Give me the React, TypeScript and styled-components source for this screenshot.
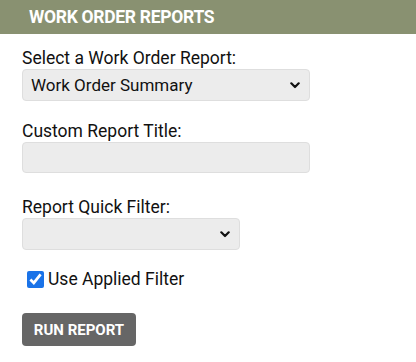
import React from "react";
import styled, { createGlobalStyle } from "styled-components";

const Global = createGlobalStyle`
  html, body { margin: 0; padding: 0; background: #fff; }
  body { font-family: Roboto, "Liberation Sans", Arial, sans-serif; color: #111; }
`;

const Panel = styled.div`
  width: 416px;
`;

const Header = styled.div`
  height: 34px;
  background: #899171;
  color: #fff;
  display: flex;
  align-items: center;
  padding-left: 29px;
  font-weight: 700;
  font-size: 17.5px;
  letter-spacing: -0.3px;
`;

const Body = styled.div`
  padding: 14px 22px 0 22px;
  display: flex;
  flex-direction: column;
`;

const Field = styled.div<{ $gap: number }>`
  display: flex;
  flex-direction: column;
  align-items: flex-start;
  margin-bottom: ${(p) => p.$gap}px;
`;

const Label = styled.label`
  font-size: 17.5px;
  line-height: 20px;
  margin-bottom: 1px;
`;

const SelectWrap = styled.div<{ $w: number }>`
  position: relative;
  width: ${(p) => p.$w}px;
  height: 32px;
`;

const Select = styled.select`
  appearance: none;
  -webkit-appearance: none;
  width: 100%;
  height: 100%;
  box-sizing: border-box;
  background: #ececec;
  border: 1px solid #dedede;
  border-radius: 4px;
  font-family: Roboto, "Liberation Sans", Arial, sans-serif;
  font-size: 17px;
  color: #111;
  padding: 0 28px 0 8px;
  outline: none;
`;

const Chevron = styled.svg`
  position: absolute;
  right: 10px;
  top: 13px;
  width: 10px;
  height: 7px;
  pointer-events: none;
`;

const Input = styled.input`
  width: 288px;
  height: 31px;
  box-sizing: border-box;
  background: #ececec;
  border: 1px solid #dedede;
  border-radius: 4px;
  font-family: Roboto, "Liberation Sans", Arial, sans-serif;
  font-size: 17px;
  padding: 0 8px;
  outline: none;
`;

const CheckRow = styled.label`
  display: flex;
  align-items: center;
  gap: 4px;
  font-size: 17.5px;
  line-height: 20px;
  padding-left: 5px;
  margin-bottom: 24px;
`;

const Check = styled.input`
  width: 17px;
  height: 17px;
  margin: 0;
  accent-color: #1a73e8;
`;

const Button = styled.button`
  width: 114px;
  height: 33px;
  background: #666;
  color: #fff;
  border: none;
  border-radius: 4px;
  font-family: Roboto, "Liberation Sans", Arial, sans-serif;
  font-weight: 700;
  font-size: 15px;
  padding: 0;
  cursor: pointer;
`;

function DropSelect({ w, value, children }: { w: number; value: string; children: React.ReactNode }) {
  return (
    <SelectWrap $w={w}>
      <Select defaultValue={value}>{children}</Select>
      <Chevron viewBox="0 0 10 7">
        <path d="M1.3 1.3 L5 5 L8.7 1.3" fill="none" stroke="#111" strokeWidth="2.2" strokeLinecap="round" strokeLinejoin="round" />
      </Chevron>
    </SelectWrap>
  );
}

export default function App() {
  return (
    <Panel>
      <Global />
      <Header>WORK ORDER REPORTS</Header>
      <Body>
        <Field $gap={20}>
          <Label>Select a Work Order Report:</Label>
          <DropSelect w={288} value="summary">
            <option value="summary">Work Order Summary</option>
          </DropSelect>
        </Field>
        <Field $gap={24}>
          <Label>Custom Report Title:</Label>
          <Input type="text" />
        </Field>
        <Field $gap={19}>
          <Label>Report Quick Filter:</Label>
          <DropSelect w={218} value="">
            <option value=""></option>
          </DropSelect>
        </Field>
        <CheckRow>
          <Check type="checkbox" defaultChecked />
          Use Applied Filter
        </CheckRow>
        <div>
          <Button>RUN REPORT</Button>
        </div>
      </Body>
    </Panel>
  );
}
